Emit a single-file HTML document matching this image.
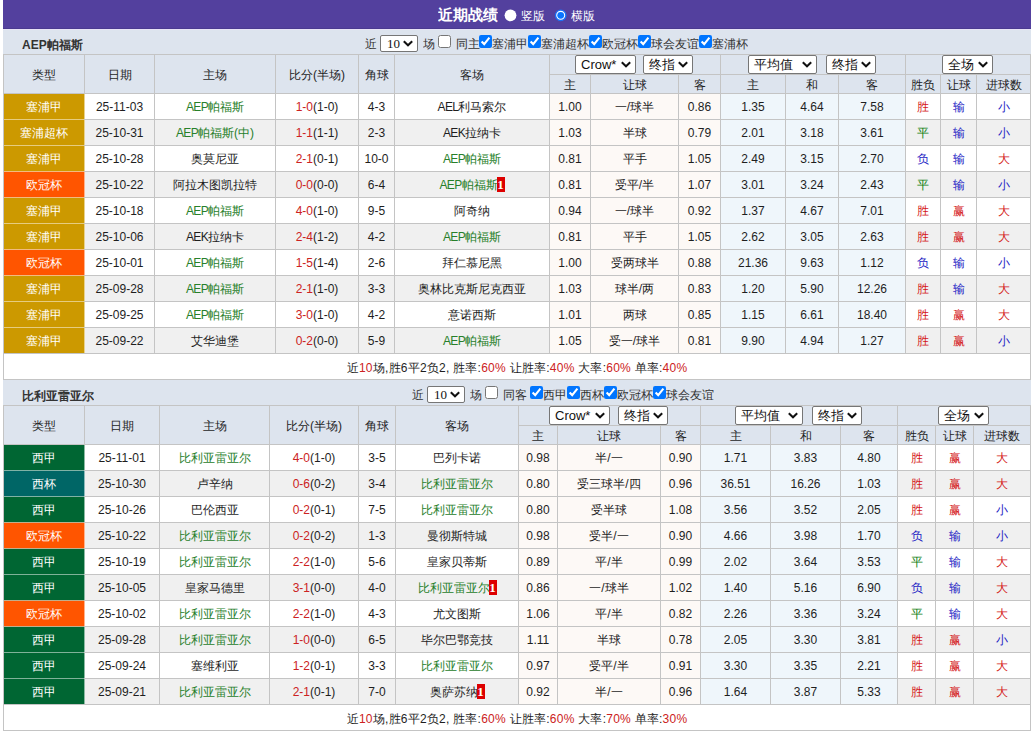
<!DOCTYPE html>
<html><head><meta charset="utf-8"><style>
html,body{margin:0;padding:0;background:#fff;width:1035px;height:731px;overflow:hidden;}
body{font-family:"Liberation Sans", sans-serif;font-size:12px;color:#1e1e1e;position:relative;}
body>div{position:absolute;box-sizing:border-box;white-space:nowrap;overflow:hidden;}
.lg{text-align:center;color:#fff;}
.tn{font-weight:bold;font-size:12px;color:#333;}
.ft{font-size:12px;color:#333;line-height:31px;height:25px;}
.cb{position:absolute;margin:0;width:13px;height:13px;}
.fs{border:1px solid #767676;border-radius:2px;background:#fff;color:#111;font-size:13px;line-height:17px;padding-left:5px;}
.fs .chev{position:absolute;right:4px;top:5px;}
.s10{font-family:"Liberation Serif",serif;font-size:13px;line-height:16px;padding-left:6px;letter-spacing:0px}
.s10 .chev{top:4px;}
.rc{display:inline-block;background:#dd0000;color:#fff;font-weight:bold;font-family:"Liberation Serif",serif;font-size:13px;line-height:15px;width:8px;text-align:center;vertical-align:middle;margin-top:-2px;margin-left:-1px}
.hdr{background:#53409e;}
</style></head><body>
<div class="hdr" style="left:3px;top:0;width:1028px;height:29px;"></div>
<div style="left:3px;top:28px;width:1028px;height:1px;background:#4a3a90;"></div>
<div style="left:438px;top:0;height:28px;line-height:30px;color:#fff;font-weight:bold;font-size:15px;">近期战绩</div>
<div style="left:504px;top:9px;width:14px;height:14px;"><svg width="14" height="14" viewBox="0 0 14 14"><circle cx="6.5" cy="6.3" r="5.9" fill="#fff"/></svg></div>
<div style="left:521px;top:1px;height:28px;line-height:30px;color:#fff;font-size:12px;">竖版</div>
<div style="left:554px;top:9px;width:14px;height:14px;"><svg width="14" height="14" viewBox="0 0 14 14"><circle cx="6.7" cy="6.3" r="5.2" fill="#fff" stroke="#1a6ef5" stroke-width="1.4"/><circle cx="6.7" cy="6.3" r="3.4" fill="#0a75ff"/></svg></div>
<div style="left:571px;top:1px;height:28px;line-height:30px;color:#fff;font-size:12px;">横版</div>
<div style="left:3px;top:29px;width:1028px;height:25px;background:#dde4ee;"></div>
<div class="tn" style="left:22px;top:29px;line-height:33px">AEP帕福斯</div>
<div class="ft" style="left:365px;top:29px">近</div>
<div class="fs s10" style="left:380px;top:35px;width:38px;height:17px">10<svg class="chev" width="10" height="7" viewBox="0 0 10 7"><path d="M0.8 1.2 L5 5.3 L9.2 1.2" fill="none" stroke="#111" stroke-width="2"/></svg></div>
<div class="ft" style="left:423px;top:29px">场</div>
<input type="checkbox" class="cb" style="left:438px;top:35px">
<div class="ft" style="left:456px;top:29px">同主</div>
<input type="checkbox" checked class="cb" style="left:479px;top:35px">
<div class="ft" style="left:492px;top:29px">塞浦甲</div>
<input type="checkbox" checked class="cb" style="left:528px;top:35px">
<div class="ft" style="left:541px;top:29px">塞浦超杯</div>
<input type="checkbox" checked class="cb" style="left:589px;top:35px">
<div class="ft" style="left:602px;top:29px">欧冠杯</div>
<input type="checkbox" checked class="cb" style="left:638px;top:35px">
<div class="ft" style="left:651px;top:29px">球会友谊</div>
<input type="checkbox" checked class="cb" style="left:699px;top:35px">
<div class="ft" style="left:712px;top:29px">塞浦杯</div>
<div style="left:3px;top:54px;width:1028px;height:40px;background:#dde4ee;"></div>
<div style="left:4px;top:55px;width:80px;height:38px;line-height:40px;text-align:center;color:#1e1e1e;">类型</div>
<div style="left:85px;top:55px;width:69px;height:38px;line-height:40px;text-align:center;color:#1e1e1e;">日期</div>
<div style="left:155px;top:55px;width:120px;height:38px;line-height:40px;text-align:center;color:#1e1e1e;">主场</div>
<div style="left:276px;top:55px;width:82px;height:38px;line-height:40px;text-align:center;color:#1e1e1e;">比分(半场)</div>
<div style="left:359px;top:55px;width:35px;height:38px;line-height:40px;text-align:center;color:#1e1e1e;">角球</div>
<div style="left:395px;top:55px;width:154px;height:38px;line-height:40px;text-align:center;color:#1e1e1e;">客场</div>
<div style="left:550px;top:75px;width:40px;height:18px;line-height:20px;text-align:center;color:#1e1e1e;">主</div>
<div style="left:591px;top:75px;width:87px;height:18px;line-height:20px;text-align:center;color:#1e1e1e;">让球</div>
<div style="left:679px;top:75px;width:41px;height:18px;line-height:20px;text-align:center;color:#1e1e1e;">客</div>
<div style="left:721px;top:75px;width:64px;height:18px;line-height:20px;text-align:center;color:#1e1e1e;">主</div>
<div style="left:786px;top:75px;width:52px;height:18px;line-height:20px;text-align:center;color:#1e1e1e;">和</div>
<div style="left:839px;top:75px;width:66px;height:18px;line-height:20px;text-align:center;color:#1e1e1e;">客</div>
<div style="left:906px;top:75px;width:34px;height:18px;line-height:20px;text-align:center;color:#1e1e1e;">胜负</div>
<div style="left:941px;top:75px;width:35px;height:18px;line-height:20px;text-align:center;color:#1e1e1e;">让球</div>
<div style="left:977px;top:75px;width:53px;height:18px;line-height:20px;text-align:center;color:#1e1e1e;">进球数</div>
<div style="left:85px;top:94px;width:69px;height:25px;line-height:27px;text-align:center;color:#1e1e1e;background:#ffffff;">25-11-03</div>
<div style="left:155px;top:94px;width:120px;height:25px;line-height:27px;text-align:center;color:#1e1e1e;background:#ffffff;"><span style="color:#27802a"><span style="letter-spacing:-0.6px">AEP</span>帕福斯</span></div>
<div style="left:276px;top:94px;width:82px;height:25px;line-height:27px;text-align:center;color:#1e1e1e;background:#ffffff;"><span style="color:#cc2222">1-0</span>(1-0)</div>
<div style="left:359px;top:94px;width:35px;height:25px;line-height:27px;text-align:center;color:#1e1e1e;background:#ffffff;">4-3</div>
<div style="left:395px;top:94px;width:154px;height:25px;line-height:27px;text-align:center;color:#1e1e1e;background:#ffffff;"><span style="letter-spacing:-0.6px">AEL</span>利马索尔</div>
<div style="left:550px;top:94px;width:40px;height:25px;line-height:27px;text-align:center;color:#1e1e1e;background:#fdf9f6;">1.00</div>
<div style="left:591px;top:94px;width:87px;height:25px;line-height:27px;text-align:center;color:#1e1e1e;background:#fdf9f6;">一/球半</div>
<div style="left:679px;top:94px;width:41px;height:25px;line-height:27px;text-align:center;color:#1e1e1e;background:#fdf9f6;">0.86</div>
<div style="left:721px;top:94px;width:64px;height:25px;line-height:27px;text-align:center;color:#1e1e1e;background:#eff6fb;">1.35</div>
<div style="left:786px;top:94px;width:52px;height:25px;line-height:27px;text-align:center;color:#1e1e1e;background:#eff6fb;">4.64</div>
<div style="left:839px;top:94px;width:66px;height:25px;line-height:27px;text-align:center;color:#1e1e1e;background:#eff6fb;">7.58</div>
<div style="left:906px;top:94px;width:34px;height:25px;line-height:27px;text-align:center;color:#d41616;background:#ffffff;">胜</div>
<div style="left:941px;top:94px;width:35px;height:25px;line-height:27px;text-align:center;color:#1c1cc4;background:#ffffff;">输</div>
<div style="left:977px;top:94px;width:53px;height:25px;line-height:27px;text-align:center;color:#1c1cc4;background:#ffffff;">小</div>
<div style="left:85px;top:120px;width:69px;height:25px;line-height:27px;text-align:center;color:#1e1e1e;background:#f0f0f0;">25-10-31</div>
<div style="left:155px;top:120px;width:120px;height:25px;line-height:27px;text-align:center;color:#1e1e1e;background:#f0f0f0;"><span style="color:#27802a"><span style="letter-spacing:-0.6px">AEP</span>帕福斯(中)</span></div>
<div style="left:276px;top:120px;width:82px;height:25px;line-height:27px;text-align:center;color:#1e1e1e;background:#f0f0f0;"><span style="color:#cc2222">1-1</span>(1-1)</div>
<div style="left:359px;top:120px;width:35px;height:25px;line-height:27px;text-align:center;color:#1e1e1e;background:#f0f0f0;">2-3</div>
<div style="left:395px;top:120px;width:154px;height:25px;line-height:27px;text-align:center;color:#1e1e1e;background:#f0f0f0;"><span style="letter-spacing:-0.6px">AEK</span>拉纳卡</div>
<div style="left:550px;top:120px;width:40px;height:25px;line-height:27px;text-align:center;color:#1e1e1e;background:#fdf9f6;">1.03</div>
<div style="left:591px;top:120px;width:87px;height:25px;line-height:27px;text-align:center;color:#1e1e1e;background:#fdf9f6;">半球</div>
<div style="left:679px;top:120px;width:41px;height:25px;line-height:27px;text-align:center;color:#1e1e1e;background:#fdf9f6;">0.79</div>
<div style="left:721px;top:120px;width:64px;height:25px;line-height:27px;text-align:center;color:#1e1e1e;background:#eff6fb;">2.01</div>
<div style="left:786px;top:120px;width:52px;height:25px;line-height:27px;text-align:center;color:#1e1e1e;background:#eff6fb;">3.18</div>
<div style="left:839px;top:120px;width:66px;height:25px;line-height:27px;text-align:center;color:#1e1e1e;background:#eff6fb;">3.61</div>
<div style="left:906px;top:120px;width:34px;height:25px;line-height:27px;text-align:center;color:#0f800f;background:#f0f0f0;">平</div>
<div style="left:941px;top:120px;width:35px;height:25px;line-height:27px;text-align:center;color:#1c1cc4;background:#f0f0f0;">输</div>
<div style="left:977px;top:120px;width:53px;height:25px;line-height:27px;text-align:center;color:#1c1cc4;background:#f0f0f0;">小</div>
<div style="left:85px;top:146px;width:69px;height:25px;line-height:27px;text-align:center;color:#1e1e1e;background:#ffffff;">25-10-28</div>
<div style="left:155px;top:146px;width:120px;height:25px;line-height:27px;text-align:center;color:#1e1e1e;background:#ffffff;">奥莫尼亚</div>
<div style="left:276px;top:146px;width:82px;height:25px;line-height:27px;text-align:center;color:#1e1e1e;background:#ffffff;"><span style="color:#cc2222">2-1</span>(0-1)</div>
<div style="left:359px;top:146px;width:35px;height:25px;line-height:27px;text-align:center;color:#1e1e1e;background:#ffffff;">10-0</div>
<div style="left:395px;top:146px;width:154px;height:25px;line-height:27px;text-align:center;color:#1e1e1e;background:#ffffff;"><span style="color:#27802a"><span style="letter-spacing:-0.6px">AEP</span>帕福斯</span></div>
<div style="left:550px;top:146px;width:40px;height:25px;line-height:27px;text-align:center;color:#1e1e1e;background:#fdf9f6;">0.81</div>
<div style="left:591px;top:146px;width:87px;height:25px;line-height:27px;text-align:center;color:#1e1e1e;background:#fdf9f6;">平手</div>
<div style="left:679px;top:146px;width:41px;height:25px;line-height:27px;text-align:center;color:#1e1e1e;background:#fdf9f6;">1.05</div>
<div style="left:721px;top:146px;width:64px;height:25px;line-height:27px;text-align:center;color:#1e1e1e;background:#eff6fb;">2.49</div>
<div style="left:786px;top:146px;width:52px;height:25px;line-height:27px;text-align:center;color:#1e1e1e;background:#eff6fb;">3.15</div>
<div style="left:839px;top:146px;width:66px;height:25px;line-height:27px;text-align:center;color:#1e1e1e;background:#eff6fb;">2.70</div>
<div style="left:906px;top:146px;width:34px;height:25px;line-height:27px;text-align:center;color:#1c1cc4;background:#ffffff;">负</div>
<div style="left:941px;top:146px;width:35px;height:25px;line-height:27px;text-align:center;color:#1c1cc4;background:#ffffff;">输</div>
<div style="left:977px;top:146px;width:53px;height:25px;line-height:27px;text-align:center;color:#d41616;background:#ffffff;">大</div>
<div style="left:85px;top:172px;width:69px;height:25px;line-height:27px;text-align:center;color:#1e1e1e;background:#f0f0f0;">25-10-22</div>
<div style="left:155px;top:172px;width:120px;height:25px;line-height:27px;text-align:center;color:#1e1e1e;background:#f0f0f0;">阿拉木图凯拉特</div>
<div style="left:276px;top:172px;width:82px;height:25px;line-height:27px;text-align:center;color:#1e1e1e;background:#f0f0f0;"><span style="color:#cc2222">0-0</span>(0-0)</div>
<div style="left:359px;top:172px;width:35px;height:25px;line-height:27px;text-align:center;color:#1e1e1e;background:#f0f0f0;">6-4</div>
<div style="left:395px;top:172px;width:154px;height:25px;line-height:27px;text-align:center;color:#1e1e1e;background:#f0f0f0;"><span style="color:#27802a"><span style="letter-spacing:-0.6px">AEP</span>帕福斯</span><span class="rc">1</span></div>
<div style="left:550px;top:172px;width:40px;height:25px;line-height:27px;text-align:center;color:#1e1e1e;background:#fdf9f6;">0.81</div>
<div style="left:591px;top:172px;width:87px;height:25px;line-height:27px;text-align:center;color:#1e1e1e;background:#fdf9f6;">受平/半</div>
<div style="left:679px;top:172px;width:41px;height:25px;line-height:27px;text-align:center;color:#1e1e1e;background:#fdf9f6;">1.07</div>
<div style="left:721px;top:172px;width:64px;height:25px;line-height:27px;text-align:center;color:#1e1e1e;background:#eff6fb;">3.01</div>
<div style="left:786px;top:172px;width:52px;height:25px;line-height:27px;text-align:center;color:#1e1e1e;background:#eff6fb;">3.24</div>
<div style="left:839px;top:172px;width:66px;height:25px;line-height:27px;text-align:center;color:#1e1e1e;background:#eff6fb;">2.43</div>
<div style="left:906px;top:172px;width:34px;height:25px;line-height:27px;text-align:center;color:#0f800f;background:#f0f0f0;">平</div>
<div style="left:941px;top:172px;width:35px;height:25px;line-height:27px;text-align:center;color:#1c1cc4;background:#f0f0f0;">输</div>
<div style="left:977px;top:172px;width:53px;height:25px;line-height:27px;text-align:center;color:#1c1cc4;background:#f0f0f0;">小</div>
<div style="left:85px;top:198px;width:69px;height:25px;line-height:27px;text-align:center;color:#1e1e1e;background:#ffffff;">25-10-18</div>
<div style="left:155px;top:198px;width:120px;height:25px;line-height:27px;text-align:center;color:#1e1e1e;background:#ffffff;"><span style="color:#27802a"><span style="letter-spacing:-0.6px">AEP</span>帕福斯</span></div>
<div style="left:276px;top:198px;width:82px;height:25px;line-height:27px;text-align:center;color:#1e1e1e;background:#ffffff;"><span style="color:#cc2222">4-0</span>(1-0)</div>
<div style="left:359px;top:198px;width:35px;height:25px;line-height:27px;text-align:center;color:#1e1e1e;background:#ffffff;">9-5</div>
<div style="left:395px;top:198px;width:154px;height:25px;line-height:27px;text-align:center;color:#1e1e1e;background:#ffffff;">阿奇纳</div>
<div style="left:550px;top:198px;width:40px;height:25px;line-height:27px;text-align:center;color:#1e1e1e;background:#fdf9f6;">0.94</div>
<div style="left:591px;top:198px;width:87px;height:25px;line-height:27px;text-align:center;color:#1e1e1e;background:#fdf9f6;">一/球半</div>
<div style="left:679px;top:198px;width:41px;height:25px;line-height:27px;text-align:center;color:#1e1e1e;background:#fdf9f6;">0.92</div>
<div style="left:721px;top:198px;width:64px;height:25px;line-height:27px;text-align:center;color:#1e1e1e;background:#eff6fb;">1.37</div>
<div style="left:786px;top:198px;width:52px;height:25px;line-height:27px;text-align:center;color:#1e1e1e;background:#eff6fb;">4.67</div>
<div style="left:839px;top:198px;width:66px;height:25px;line-height:27px;text-align:center;color:#1e1e1e;background:#eff6fb;">7.01</div>
<div style="left:906px;top:198px;width:34px;height:25px;line-height:27px;text-align:center;color:#d41616;background:#ffffff;">胜</div>
<div style="left:941px;top:198px;width:35px;height:25px;line-height:27px;text-align:center;color:#d41616;background:#ffffff;">赢</div>
<div style="left:977px;top:198px;width:53px;height:25px;line-height:27px;text-align:center;color:#d41616;background:#ffffff;">大</div>
<div style="left:85px;top:224px;width:69px;height:25px;line-height:27px;text-align:center;color:#1e1e1e;background:#f0f0f0;">25-10-06</div>
<div style="left:155px;top:224px;width:120px;height:25px;line-height:27px;text-align:center;color:#1e1e1e;background:#f0f0f0;"><span style="letter-spacing:-0.6px">AEK</span>拉纳卡</div>
<div style="left:276px;top:224px;width:82px;height:25px;line-height:27px;text-align:center;color:#1e1e1e;background:#f0f0f0;"><span style="color:#cc2222">2-4</span>(1-2)</div>
<div style="left:359px;top:224px;width:35px;height:25px;line-height:27px;text-align:center;color:#1e1e1e;background:#f0f0f0;">4-2</div>
<div style="left:395px;top:224px;width:154px;height:25px;line-height:27px;text-align:center;color:#1e1e1e;background:#f0f0f0;"><span style="color:#27802a"><span style="letter-spacing:-0.6px">AEP</span>帕福斯</span></div>
<div style="left:550px;top:224px;width:40px;height:25px;line-height:27px;text-align:center;color:#1e1e1e;background:#fdf9f6;">0.81</div>
<div style="left:591px;top:224px;width:87px;height:25px;line-height:27px;text-align:center;color:#1e1e1e;background:#fdf9f6;">平手</div>
<div style="left:679px;top:224px;width:41px;height:25px;line-height:27px;text-align:center;color:#1e1e1e;background:#fdf9f6;">1.05</div>
<div style="left:721px;top:224px;width:64px;height:25px;line-height:27px;text-align:center;color:#1e1e1e;background:#eff6fb;">2.62</div>
<div style="left:786px;top:224px;width:52px;height:25px;line-height:27px;text-align:center;color:#1e1e1e;background:#eff6fb;">3.05</div>
<div style="left:839px;top:224px;width:66px;height:25px;line-height:27px;text-align:center;color:#1e1e1e;background:#eff6fb;">2.63</div>
<div style="left:906px;top:224px;width:34px;height:25px;line-height:27px;text-align:center;color:#d41616;background:#f0f0f0;">胜</div>
<div style="left:941px;top:224px;width:35px;height:25px;line-height:27px;text-align:center;color:#d41616;background:#f0f0f0;">赢</div>
<div style="left:977px;top:224px;width:53px;height:25px;line-height:27px;text-align:center;color:#d41616;background:#f0f0f0;">大</div>
<div style="left:85px;top:250px;width:69px;height:25px;line-height:27px;text-align:center;color:#1e1e1e;background:#ffffff;">25-10-01</div>
<div style="left:155px;top:250px;width:120px;height:25px;line-height:27px;text-align:center;color:#1e1e1e;background:#ffffff;"><span style="color:#27802a"><span style="letter-spacing:-0.6px">AEP</span>帕福斯</span></div>
<div style="left:276px;top:250px;width:82px;height:25px;line-height:27px;text-align:center;color:#1e1e1e;background:#ffffff;"><span style="color:#cc2222">1-5</span>(1-4)</div>
<div style="left:359px;top:250px;width:35px;height:25px;line-height:27px;text-align:center;color:#1e1e1e;background:#ffffff;">2-6</div>
<div style="left:395px;top:250px;width:154px;height:25px;line-height:27px;text-align:center;color:#1e1e1e;background:#ffffff;">拜仁慕尼黑</div>
<div style="left:550px;top:250px;width:40px;height:25px;line-height:27px;text-align:center;color:#1e1e1e;background:#fdf9f6;">1.00</div>
<div style="left:591px;top:250px;width:87px;height:25px;line-height:27px;text-align:center;color:#1e1e1e;background:#fdf9f6;">受两球半</div>
<div style="left:679px;top:250px;width:41px;height:25px;line-height:27px;text-align:center;color:#1e1e1e;background:#fdf9f6;">0.88</div>
<div style="left:721px;top:250px;width:64px;height:25px;line-height:27px;text-align:center;color:#1e1e1e;background:#eff6fb;">21.36</div>
<div style="left:786px;top:250px;width:52px;height:25px;line-height:27px;text-align:center;color:#1e1e1e;background:#eff6fb;">9.63</div>
<div style="left:839px;top:250px;width:66px;height:25px;line-height:27px;text-align:center;color:#1e1e1e;background:#eff6fb;">1.12</div>
<div style="left:906px;top:250px;width:34px;height:25px;line-height:27px;text-align:center;color:#1c1cc4;background:#ffffff;">负</div>
<div style="left:941px;top:250px;width:35px;height:25px;line-height:27px;text-align:center;color:#1c1cc4;background:#ffffff;">输</div>
<div style="left:977px;top:250px;width:53px;height:25px;line-height:27px;text-align:center;color:#1c1cc4;background:#ffffff;">小</div>
<div style="left:85px;top:276px;width:69px;height:25px;line-height:27px;text-align:center;color:#1e1e1e;background:#f0f0f0;">25-09-28</div>
<div style="left:155px;top:276px;width:120px;height:25px;line-height:27px;text-align:center;color:#1e1e1e;background:#f0f0f0;"><span style="color:#27802a"><span style="letter-spacing:-0.6px">AEP</span>帕福斯</span></div>
<div style="left:276px;top:276px;width:82px;height:25px;line-height:27px;text-align:center;color:#1e1e1e;background:#f0f0f0;"><span style="color:#cc2222">2-1</span>(1-0)</div>
<div style="left:359px;top:276px;width:35px;height:25px;line-height:27px;text-align:center;color:#1e1e1e;background:#f0f0f0;">3-3</div>
<div style="left:395px;top:276px;width:154px;height:25px;line-height:27px;text-align:center;color:#1e1e1e;background:#f0f0f0;">奥林比克斯尼克西亚</div>
<div style="left:550px;top:276px;width:40px;height:25px;line-height:27px;text-align:center;color:#1e1e1e;background:#fdf9f6;">1.03</div>
<div style="left:591px;top:276px;width:87px;height:25px;line-height:27px;text-align:center;color:#1e1e1e;background:#fdf9f6;">球半/两</div>
<div style="left:679px;top:276px;width:41px;height:25px;line-height:27px;text-align:center;color:#1e1e1e;background:#fdf9f6;">0.83</div>
<div style="left:721px;top:276px;width:64px;height:25px;line-height:27px;text-align:center;color:#1e1e1e;background:#eff6fb;">1.20</div>
<div style="left:786px;top:276px;width:52px;height:25px;line-height:27px;text-align:center;color:#1e1e1e;background:#eff6fb;">5.90</div>
<div style="left:839px;top:276px;width:66px;height:25px;line-height:27px;text-align:center;color:#1e1e1e;background:#eff6fb;">12.26</div>
<div style="left:906px;top:276px;width:34px;height:25px;line-height:27px;text-align:center;color:#d41616;background:#f0f0f0;">胜</div>
<div style="left:941px;top:276px;width:35px;height:25px;line-height:27px;text-align:center;color:#1c1cc4;background:#f0f0f0;">输</div>
<div style="left:977px;top:276px;width:53px;height:25px;line-height:27px;text-align:center;color:#d41616;background:#f0f0f0;">大</div>
<div style="left:85px;top:302px;width:69px;height:25px;line-height:27px;text-align:center;color:#1e1e1e;background:#ffffff;">25-09-25</div>
<div style="left:155px;top:302px;width:120px;height:25px;line-height:27px;text-align:center;color:#1e1e1e;background:#ffffff;"><span style="color:#27802a"><span style="letter-spacing:-0.6px">AEP</span>帕福斯</span></div>
<div style="left:276px;top:302px;width:82px;height:25px;line-height:27px;text-align:center;color:#1e1e1e;background:#ffffff;"><span style="color:#cc2222">3-0</span>(1-0)</div>
<div style="left:359px;top:302px;width:35px;height:25px;line-height:27px;text-align:center;color:#1e1e1e;background:#ffffff;">4-2</div>
<div style="left:395px;top:302px;width:154px;height:25px;line-height:27px;text-align:center;color:#1e1e1e;background:#ffffff;">意诺西斯</div>
<div style="left:550px;top:302px;width:40px;height:25px;line-height:27px;text-align:center;color:#1e1e1e;background:#fdf9f6;">1.01</div>
<div style="left:591px;top:302px;width:87px;height:25px;line-height:27px;text-align:center;color:#1e1e1e;background:#fdf9f6;">两球</div>
<div style="left:679px;top:302px;width:41px;height:25px;line-height:27px;text-align:center;color:#1e1e1e;background:#fdf9f6;">0.85</div>
<div style="left:721px;top:302px;width:64px;height:25px;line-height:27px;text-align:center;color:#1e1e1e;background:#eff6fb;">1.15</div>
<div style="left:786px;top:302px;width:52px;height:25px;line-height:27px;text-align:center;color:#1e1e1e;background:#eff6fb;">6.61</div>
<div style="left:839px;top:302px;width:66px;height:25px;line-height:27px;text-align:center;color:#1e1e1e;background:#eff6fb;">18.40</div>
<div style="left:906px;top:302px;width:34px;height:25px;line-height:27px;text-align:center;color:#d41616;background:#ffffff;">胜</div>
<div style="left:941px;top:302px;width:35px;height:25px;line-height:27px;text-align:center;color:#d41616;background:#ffffff;">赢</div>
<div style="left:977px;top:302px;width:53px;height:25px;line-height:27px;text-align:center;color:#d41616;background:#ffffff;">大</div>
<div style="left:85px;top:328px;width:69px;height:25px;line-height:27px;text-align:center;color:#1e1e1e;background:#f0f0f0;">25-09-22</div>
<div style="left:155px;top:328px;width:120px;height:25px;line-height:27px;text-align:center;color:#1e1e1e;background:#f0f0f0;">艾华迪堡</div>
<div style="left:276px;top:328px;width:82px;height:25px;line-height:27px;text-align:center;color:#1e1e1e;background:#f0f0f0;"><span style="color:#cc2222">0-2</span>(0-0)</div>
<div style="left:359px;top:328px;width:35px;height:25px;line-height:27px;text-align:center;color:#1e1e1e;background:#f0f0f0;">5-9</div>
<div style="left:395px;top:328px;width:154px;height:25px;line-height:27px;text-align:center;color:#1e1e1e;background:#f0f0f0;"><span style="color:#27802a"><span style="letter-spacing:-0.6px">AEP</span>帕福斯</span></div>
<div style="left:550px;top:328px;width:40px;height:25px;line-height:27px;text-align:center;color:#1e1e1e;background:#fdf9f6;">1.05</div>
<div style="left:591px;top:328px;width:87px;height:25px;line-height:27px;text-align:center;color:#1e1e1e;background:#fdf9f6;">受一/球半</div>
<div style="left:679px;top:328px;width:41px;height:25px;line-height:27px;text-align:center;color:#1e1e1e;background:#fdf9f6;">0.81</div>
<div style="left:721px;top:328px;width:64px;height:25px;line-height:27px;text-align:center;color:#1e1e1e;background:#eff6fb;">9.90</div>
<div style="left:786px;top:328px;width:52px;height:25px;line-height:27px;text-align:center;color:#1e1e1e;background:#eff6fb;">4.94</div>
<div style="left:839px;top:328px;width:66px;height:25px;line-height:27px;text-align:center;color:#1e1e1e;background:#eff6fb;">1.27</div>
<div style="left:906px;top:328px;width:34px;height:25px;line-height:27px;text-align:center;color:#d41616;background:#f0f0f0;">胜</div>
<div style="left:941px;top:328px;width:35px;height:25px;line-height:27px;text-align:center;color:#d41616;background:#f0f0f0;">赢</div>
<div style="left:977px;top:328px;width:53px;height:25px;line-height:27px;text-align:center;color:#1c1cc4;background:#f0f0f0;">小</div>
<div style="left:4px;top:354px;width:1026px;height:25px;background:#fff;line-height:29px;text-align:center;color:#1e1e1e;letter-spacing:0.24px;">近<span style="color:#cc2222">10</span>场,胜6平2负2, 胜率:<span style="color:#cc2222">60%</span> 让胜率:<span style="color:#cc2222">40%</span> 大率:<span style="color:#cc2222">60%</span> 单率:<span style="color:#cc2222">40%</span></div>
<div style="left:3px;top:54px;width:1028px;height:1px;background:#c4c4c4;"></div>
<div style="left:3px;top:93px;width:1028px;height:1px;background:#c4c4c4;"></div>
<div style="left:3px;top:119px;width:1028px;height:1px;background:#c4c4c4;"></div>
<div style="left:3px;top:145px;width:1028px;height:1px;background:#c4c4c4;"></div>
<div style="left:3px;top:171px;width:1028px;height:1px;background:#c4c4c4;"></div>
<div style="left:3px;top:197px;width:1028px;height:1px;background:#c4c4c4;"></div>
<div style="left:3px;top:223px;width:1028px;height:1px;background:#c4c4c4;"></div>
<div style="left:3px;top:249px;width:1028px;height:1px;background:#c4c4c4;"></div>
<div style="left:3px;top:275px;width:1028px;height:1px;background:#c4c4c4;"></div>
<div style="left:3px;top:301px;width:1028px;height:1px;background:#c4c4c4;"></div>
<div style="left:3px;top:327px;width:1028px;height:1px;background:#c4c4c4;"></div>
<div style="left:3px;top:353px;width:1028px;height:1px;background:#c4c4c4;"></div>
<div style="left:3px;top:379px;width:1028px;height:1px;background:#c4c4c4;"></div>
<div style="left:549px;top:74px;width:482px;height:1px;background:#c4c4c4;"></div>
<div style="left:3px;top:54px;width:1px;height:326px;background:#c4c4c4;"></div>
<div style="left:1030px;top:54px;width:1px;height:326px;background:#c4c4c4;"></div>
<div style="left:84px;top:54px;width:1px;height:40px;background:#c4c4c4;"></div>
<div style="left:154px;top:54px;width:1px;height:300px;background:#c4c4c4;"></div>
<div style="left:275px;top:54px;width:1px;height:300px;background:#c4c4c4;"></div>
<div style="left:358px;top:54px;width:1px;height:300px;background:#c4c4c4;"></div>
<div style="left:394px;top:54px;width:1px;height:300px;background:#c4c4c4;"></div>
<div style="left:549px;top:54px;width:1px;height:300px;background:#c4c4c4;"></div>
<div style="left:590px;top:74px;width:1px;height:280px;background:#c4c4c4;"></div>
<div style="left:678px;top:74px;width:1px;height:280px;background:#c4c4c4;"></div>
<div style="left:720px;top:54px;width:1px;height:300px;background:#c4c4c4;"></div>
<div style="left:785px;top:74px;width:1px;height:280px;background:#c4c4c4;"></div>
<div style="left:838px;top:74px;width:1px;height:280px;background:#c4c4c4;"></div>
<div style="left:905px;top:54px;width:1px;height:300px;background:#c4c4c4;"></div>
<div style="left:940px;top:74px;width:1px;height:280px;background:#c4c4c4;"></div>
<div style="left:976px;top:74px;width:1px;height:280px;background:#c4c4c4;"></div>
<div style="left:4px;top:94px;width:80px;height:25px;background:#cc9900;"></div>
<div style="left:84px;top:94px;width:1px;height:25px;background:#e8d18c;"></div>
<div class="lg" style="left:4px;top:94px;width:80px;height:25px;line-height:27px;">塞浦甲</div>
<div style="left:4px;top:119px;width:80px;height:1px;background:#e6cc80;"></div>
<div style="left:4px;top:120px;width:80px;height:25px;background:#cc9900;"></div>
<div style="left:84px;top:120px;width:1px;height:25px;background:#e8d18c;"></div>
<div class="lg" style="left:4px;top:120px;width:80px;height:25px;line-height:27px;">塞浦超杯</div>
<div style="left:4px;top:145px;width:80px;height:1px;background:#e6cc80;"></div>
<div style="left:4px;top:146px;width:80px;height:25px;background:#cc9900;"></div>
<div style="left:84px;top:146px;width:1px;height:25px;background:#e8d18c;"></div>
<div class="lg" style="left:4px;top:146px;width:80px;height:25px;line-height:27px;">塞浦甲</div>
<div style="left:4px;top:171px;width:80px;height:1px;background:#f2bb80;"></div>
<div style="left:4px;top:172px;width:80px;height:25px;background:#ff5500;"></div>
<div style="left:84px;top:172px;width:1px;height:25px;background:#ffb28c;"></div>
<div class="lg" style="left:4px;top:172px;width:80px;height:25px;line-height:27px;">欧冠杯</div>
<div style="left:4px;top:197px;width:80px;height:1px;background:#f2bb80;"></div>
<div style="left:4px;top:198px;width:80px;height:25px;background:#cc9900;"></div>
<div style="left:84px;top:198px;width:1px;height:25px;background:#e8d18c;"></div>
<div class="lg" style="left:4px;top:198px;width:80px;height:25px;line-height:27px;">塞浦甲</div>
<div style="left:4px;top:223px;width:80px;height:1px;background:#e6cc80;"></div>
<div style="left:4px;top:224px;width:80px;height:25px;background:#cc9900;"></div>
<div style="left:84px;top:224px;width:1px;height:25px;background:#e8d18c;"></div>
<div class="lg" style="left:4px;top:224px;width:80px;height:25px;line-height:27px;">塞浦甲</div>
<div style="left:4px;top:249px;width:80px;height:1px;background:#f2bb80;"></div>
<div style="left:4px;top:250px;width:80px;height:25px;background:#ff5500;"></div>
<div style="left:84px;top:250px;width:1px;height:25px;background:#ffb28c;"></div>
<div class="lg" style="left:4px;top:250px;width:80px;height:25px;line-height:27px;">欧冠杯</div>
<div style="left:4px;top:275px;width:80px;height:1px;background:#f2bb80;"></div>
<div style="left:4px;top:276px;width:80px;height:25px;background:#cc9900;"></div>
<div style="left:84px;top:276px;width:1px;height:25px;background:#e8d18c;"></div>
<div class="lg" style="left:4px;top:276px;width:80px;height:25px;line-height:27px;">塞浦甲</div>
<div style="left:4px;top:301px;width:80px;height:1px;background:#e6cc80;"></div>
<div style="left:4px;top:302px;width:80px;height:25px;background:#cc9900;"></div>
<div style="left:84px;top:302px;width:1px;height:25px;background:#e8d18c;"></div>
<div class="lg" style="left:4px;top:302px;width:80px;height:25px;line-height:27px;">塞浦甲</div>
<div style="left:4px;top:327px;width:80px;height:1px;background:#e6cc80;"></div>
<div style="left:4px;top:328px;width:80px;height:25px;background:#cc9900;"></div>
<div style="left:84px;top:328px;width:1px;height:25px;background:#e8d18c;"></div>
<div class="lg" style="left:4px;top:328px;width:80px;height:25px;line-height:27px;">塞浦甲</div>
<div class="fs" style="left:575px;top:55px;width:61px;height:19px">Crow*<svg class="chev" width="10" height="7" viewBox="0 0 10 7"><path d="M0.8 1.2 L5 5.3 L9.2 1.2" fill="none" stroke="#111" stroke-width="2"/></svg></div>
<div class="fs" style="left:643px;top:55px;width:50px;height:19px">终指<svg class="chev" width="10" height="7" viewBox="0 0 10 7"><path d="M0.8 1.2 L5 5.3 L9.2 1.2" fill="none" stroke="#111" stroke-width="2"/></svg></div>
<div class="fs" style="left:748px;top:55px;width:69px;height:19px">平均值<svg class="chev" width="10" height="7" viewBox="0 0 10 7"><path d="M0.8 1.2 L5 5.3 L9.2 1.2" fill="none" stroke="#111" stroke-width="2"/></svg></div>
<div class="fs" style="left:826px;top:55px;width:50px;height:19px">终指<svg class="chev" width="10" height="7" viewBox="0 0 10 7"><path d="M0.8 1.2 L5 5.3 L9.2 1.2" fill="none" stroke="#111" stroke-width="2"/></svg></div>
<div class="fs" style="left:942px;top:55px;width:51px;height:19px">全场<svg class="chev" width="10" height="7" viewBox="0 0 10 7"><path d="M0.8 1.2 L5 5.3 L9.2 1.2" fill="none" stroke="#111" stroke-width="2"/></svg></div>
<div style="left:3px;top:380px;width:1028px;height:25px;background:#dde4ee;"></div>
<div class="tn" style="left:22px;top:380px;line-height:33px">比利亚雷亚尔</div>
<div class="ft" style="left:412px;top:380px">近</div>
<div class="fs s10" style="left:427px;top:386px;width:38px;height:17px">10<svg class="chev" width="10" height="7" viewBox="0 0 10 7"><path d="M0.8 1.2 L5 5.3 L9.2 1.2" fill="none" stroke="#111" stroke-width="2"/></svg></div>
<div class="ft" style="left:470px;top:380px">场</div>
<input type="checkbox" class="cb" style="left:485px;top:386px">
<div class="ft" style="left:503px;top:380px">同客</div>
<input type="checkbox" checked class="cb" style="left:530px;top:386px">
<div class="ft" style="left:543px;top:380px">西甲</div>
<input type="checkbox" checked class="cb" style="left:567px;top:386px">
<div class="ft" style="left:580px;top:380px">西杯</div>
<input type="checkbox" checked class="cb" style="left:604px;top:386px">
<div class="ft" style="left:617px;top:380px">欧冠杯</div>
<input type="checkbox" checked class="cb" style="left:653px;top:386px">
<div class="ft" style="left:666px;top:380px">球会友谊</div>
<div style="left:3px;top:405px;width:1028px;height:40px;background:#dde4ee;"></div>
<div style="left:4px;top:406px;width:80px;height:38px;line-height:40px;text-align:center;color:#1e1e1e;">类型</div>
<div style="left:85px;top:406px;width:74px;height:38px;line-height:40px;text-align:center;color:#1e1e1e;">日期</div>
<div style="left:160px;top:406px;width:109px;height:38px;line-height:40px;text-align:center;color:#1e1e1e;">主场</div>
<div style="left:270px;top:406px;width:88px;height:38px;line-height:40px;text-align:center;color:#1e1e1e;">比分(半场)</div>
<div style="left:359px;top:406px;width:36px;height:38px;line-height:40px;text-align:center;color:#1e1e1e;">角球</div>
<div style="left:396px;top:406px;width:122px;height:38px;line-height:40px;text-align:center;color:#1e1e1e;">客场</div>
<div style="left:519px;top:426px;width:38px;height:18px;line-height:20px;text-align:center;color:#1e1e1e;">主</div>
<div style="left:558px;top:426px;width:102px;height:18px;line-height:20px;text-align:center;color:#1e1e1e;">让球</div>
<div style="left:661px;top:426px;width:39px;height:18px;line-height:20px;text-align:center;color:#1e1e1e;">客</div>
<div style="left:701px;top:426px;width:69px;height:18px;line-height:20px;text-align:center;color:#1e1e1e;">主</div>
<div style="left:771px;top:426px;width:69px;height:18px;line-height:20px;text-align:center;color:#1e1e1e;">和</div>
<div style="left:841px;top:426px;width:56px;height:18px;line-height:20px;text-align:center;color:#1e1e1e;">客</div>
<div style="left:898px;top:426px;width:37px;height:18px;line-height:20px;text-align:center;color:#1e1e1e;">胜负</div>
<div style="left:936px;top:426px;width:37px;height:18px;line-height:20px;text-align:center;color:#1e1e1e;">让球</div>
<div style="left:974px;top:426px;width:56px;height:18px;line-height:20px;text-align:center;color:#1e1e1e;">进球数</div>
<div style="left:85px;top:445px;width:74px;height:25px;line-height:27px;text-align:center;color:#1e1e1e;background:#ffffff;">25-11-01</div>
<div style="left:160px;top:445px;width:109px;height:25px;line-height:27px;text-align:center;color:#1e1e1e;background:#ffffff;"><span style="color:#27802a">比利亚雷亚尔</span></div>
<div style="left:270px;top:445px;width:88px;height:25px;line-height:27px;text-align:center;color:#1e1e1e;background:#ffffff;"><span style="color:#cc2222">4-0</span>(1-0)</div>
<div style="left:359px;top:445px;width:36px;height:25px;line-height:27px;text-align:center;color:#1e1e1e;background:#ffffff;">3-5</div>
<div style="left:396px;top:445px;width:122px;height:25px;line-height:27px;text-align:center;color:#1e1e1e;background:#ffffff;">巴列卡诺</div>
<div style="left:519px;top:445px;width:38px;height:25px;line-height:27px;text-align:center;color:#1e1e1e;background:#fdf9f6;">0.98</div>
<div style="left:558px;top:445px;width:102px;height:25px;line-height:27px;text-align:center;color:#1e1e1e;background:#fdf9f6;">半/一</div>
<div style="left:661px;top:445px;width:39px;height:25px;line-height:27px;text-align:center;color:#1e1e1e;background:#fdf9f6;">0.90</div>
<div style="left:701px;top:445px;width:69px;height:25px;line-height:27px;text-align:center;color:#1e1e1e;background:#eff6fb;">1.71</div>
<div style="left:771px;top:445px;width:69px;height:25px;line-height:27px;text-align:center;color:#1e1e1e;background:#eff6fb;">3.83</div>
<div style="left:841px;top:445px;width:56px;height:25px;line-height:27px;text-align:center;color:#1e1e1e;background:#eff6fb;">4.80</div>
<div style="left:898px;top:445px;width:37px;height:25px;line-height:27px;text-align:center;color:#d41616;background:#ffffff;">胜</div>
<div style="left:936px;top:445px;width:37px;height:25px;line-height:27px;text-align:center;color:#d41616;background:#ffffff;">赢</div>
<div style="left:974px;top:445px;width:56px;height:25px;line-height:27px;text-align:center;color:#d41616;background:#ffffff;">大</div>
<div style="left:85px;top:471px;width:74px;height:25px;line-height:27px;text-align:center;color:#1e1e1e;background:#f0f0f0;">25-10-30</div>
<div style="left:160px;top:471px;width:109px;height:25px;line-height:27px;text-align:center;color:#1e1e1e;background:#f0f0f0;">卢辛纳</div>
<div style="left:270px;top:471px;width:88px;height:25px;line-height:27px;text-align:center;color:#1e1e1e;background:#f0f0f0;"><span style="color:#cc2222">0-6</span>(0-2)</div>
<div style="left:359px;top:471px;width:36px;height:25px;line-height:27px;text-align:center;color:#1e1e1e;background:#f0f0f0;">3-4</div>
<div style="left:396px;top:471px;width:122px;height:25px;line-height:27px;text-align:center;color:#1e1e1e;background:#f0f0f0;"><span style="color:#27802a">比利亚雷亚尔</span></div>
<div style="left:519px;top:471px;width:38px;height:25px;line-height:27px;text-align:center;color:#1e1e1e;background:#fdf9f6;">0.80</div>
<div style="left:558px;top:471px;width:102px;height:25px;line-height:27px;text-align:center;color:#1e1e1e;background:#fdf9f6;">受三球半/四</div>
<div style="left:661px;top:471px;width:39px;height:25px;line-height:27px;text-align:center;color:#1e1e1e;background:#fdf9f6;">0.96</div>
<div style="left:701px;top:471px;width:69px;height:25px;line-height:27px;text-align:center;color:#1e1e1e;background:#eff6fb;">36.51</div>
<div style="left:771px;top:471px;width:69px;height:25px;line-height:27px;text-align:center;color:#1e1e1e;background:#eff6fb;">16.26</div>
<div style="left:841px;top:471px;width:56px;height:25px;line-height:27px;text-align:center;color:#1e1e1e;background:#eff6fb;">1.03</div>
<div style="left:898px;top:471px;width:37px;height:25px;line-height:27px;text-align:center;color:#d41616;background:#f0f0f0;">胜</div>
<div style="left:936px;top:471px;width:37px;height:25px;line-height:27px;text-align:center;color:#d41616;background:#f0f0f0;">赢</div>
<div style="left:974px;top:471px;width:56px;height:25px;line-height:27px;text-align:center;color:#d41616;background:#f0f0f0;">大</div>
<div style="left:85px;top:497px;width:74px;height:25px;line-height:27px;text-align:center;color:#1e1e1e;background:#ffffff;">25-10-26</div>
<div style="left:160px;top:497px;width:109px;height:25px;line-height:27px;text-align:center;color:#1e1e1e;background:#ffffff;">巴伦西亚</div>
<div style="left:270px;top:497px;width:88px;height:25px;line-height:27px;text-align:center;color:#1e1e1e;background:#ffffff;"><span style="color:#cc2222">0-2</span>(0-1)</div>
<div style="left:359px;top:497px;width:36px;height:25px;line-height:27px;text-align:center;color:#1e1e1e;background:#ffffff;">7-5</div>
<div style="left:396px;top:497px;width:122px;height:25px;line-height:27px;text-align:center;color:#1e1e1e;background:#ffffff;"><span style="color:#27802a">比利亚雷亚尔</span></div>
<div style="left:519px;top:497px;width:38px;height:25px;line-height:27px;text-align:center;color:#1e1e1e;background:#fdf9f6;">0.80</div>
<div style="left:558px;top:497px;width:102px;height:25px;line-height:27px;text-align:center;color:#1e1e1e;background:#fdf9f6;">受半球</div>
<div style="left:661px;top:497px;width:39px;height:25px;line-height:27px;text-align:center;color:#1e1e1e;background:#fdf9f6;">1.08</div>
<div style="left:701px;top:497px;width:69px;height:25px;line-height:27px;text-align:center;color:#1e1e1e;background:#eff6fb;">3.56</div>
<div style="left:771px;top:497px;width:69px;height:25px;line-height:27px;text-align:center;color:#1e1e1e;background:#eff6fb;">3.52</div>
<div style="left:841px;top:497px;width:56px;height:25px;line-height:27px;text-align:center;color:#1e1e1e;background:#eff6fb;">2.05</div>
<div style="left:898px;top:497px;width:37px;height:25px;line-height:27px;text-align:center;color:#d41616;background:#ffffff;">胜</div>
<div style="left:936px;top:497px;width:37px;height:25px;line-height:27px;text-align:center;color:#d41616;background:#ffffff;">赢</div>
<div style="left:974px;top:497px;width:56px;height:25px;line-height:27px;text-align:center;color:#1c1cc4;background:#ffffff;">小</div>
<div style="left:85px;top:523px;width:74px;height:25px;line-height:27px;text-align:center;color:#1e1e1e;background:#f0f0f0;">25-10-22</div>
<div style="left:160px;top:523px;width:109px;height:25px;line-height:27px;text-align:center;color:#1e1e1e;background:#f0f0f0;"><span style="color:#27802a">比利亚雷亚尔</span></div>
<div style="left:270px;top:523px;width:88px;height:25px;line-height:27px;text-align:center;color:#1e1e1e;background:#f0f0f0;"><span style="color:#cc2222">0-2</span>(0-2)</div>
<div style="left:359px;top:523px;width:36px;height:25px;line-height:27px;text-align:center;color:#1e1e1e;background:#f0f0f0;">1-3</div>
<div style="left:396px;top:523px;width:122px;height:25px;line-height:27px;text-align:center;color:#1e1e1e;background:#f0f0f0;">曼彻斯特城</div>
<div style="left:519px;top:523px;width:38px;height:25px;line-height:27px;text-align:center;color:#1e1e1e;background:#fdf9f6;">0.98</div>
<div style="left:558px;top:523px;width:102px;height:25px;line-height:27px;text-align:center;color:#1e1e1e;background:#fdf9f6;">受半/一</div>
<div style="left:661px;top:523px;width:39px;height:25px;line-height:27px;text-align:center;color:#1e1e1e;background:#fdf9f6;">0.90</div>
<div style="left:701px;top:523px;width:69px;height:25px;line-height:27px;text-align:center;color:#1e1e1e;background:#eff6fb;">4.66</div>
<div style="left:771px;top:523px;width:69px;height:25px;line-height:27px;text-align:center;color:#1e1e1e;background:#eff6fb;">3.98</div>
<div style="left:841px;top:523px;width:56px;height:25px;line-height:27px;text-align:center;color:#1e1e1e;background:#eff6fb;">1.70</div>
<div style="left:898px;top:523px;width:37px;height:25px;line-height:27px;text-align:center;color:#1c1cc4;background:#f0f0f0;">负</div>
<div style="left:936px;top:523px;width:37px;height:25px;line-height:27px;text-align:center;color:#1c1cc4;background:#f0f0f0;">输</div>
<div style="left:974px;top:523px;width:56px;height:25px;line-height:27px;text-align:center;color:#1c1cc4;background:#f0f0f0;">小</div>
<div style="left:85px;top:549px;width:74px;height:25px;line-height:27px;text-align:center;color:#1e1e1e;background:#ffffff;">25-10-19</div>
<div style="left:160px;top:549px;width:109px;height:25px;line-height:27px;text-align:center;color:#1e1e1e;background:#ffffff;"><span style="color:#27802a">比利亚雷亚尔</span></div>
<div style="left:270px;top:549px;width:88px;height:25px;line-height:27px;text-align:center;color:#1e1e1e;background:#ffffff;"><span style="color:#cc2222">2-2</span>(1-0)</div>
<div style="left:359px;top:549px;width:36px;height:25px;line-height:27px;text-align:center;color:#1e1e1e;background:#ffffff;">5-6</div>
<div style="left:396px;top:549px;width:122px;height:25px;line-height:27px;text-align:center;color:#1e1e1e;background:#ffffff;">皇家贝蒂斯</div>
<div style="left:519px;top:549px;width:38px;height:25px;line-height:27px;text-align:center;color:#1e1e1e;background:#fdf9f6;">0.89</div>
<div style="left:558px;top:549px;width:102px;height:25px;line-height:27px;text-align:center;color:#1e1e1e;background:#fdf9f6;">平/半</div>
<div style="left:661px;top:549px;width:39px;height:25px;line-height:27px;text-align:center;color:#1e1e1e;background:#fdf9f6;">0.99</div>
<div style="left:701px;top:549px;width:69px;height:25px;line-height:27px;text-align:center;color:#1e1e1e;background:#eff6fb;">2.02</div>
<div style="left:771px;top:549px;width:69px;height:25px;line-height:27px;text-align:center;color:#1e1e1e;background:#eff6fb;">3.64</div>
<div style="left:841px;top:549px;width:56px;height:25px;line-height:27px;text-align:center;color:#1e1e1e;background:#eff6fb;">3.53</div>
<div style="left:898px;top:549px;width:37px;height:25px;line-height:27px;text-align:center;color:#0f800f;background:#ffffff;">平</div>
<div style="left:936px;top:549px;width:37px;height:25px;line-height:27px;text-align:center;color:#1c1cc4;background:#ffffff;">输</div>
<div style="left:974px;top:549px;width:56px;height:25px;line-height:27px;text-align:center;color:#d41616;background:#ffffff;">大</div>
<div style="left:85px;top:575px;width:74px;height:25px;line-height:27px;text-align:center;color:#1e1e1e;background:#f0f0f0;">25-10-05</div>
<div style="left:160px;top:575px;width:109px;height:25px;line-height:27px;text-align:center;color:#1e1e1e;background:#f0f0f0;">皇家马德里</div>
<div style="left:270px;top:575px;width:88px;height:25px;line-height:27px;text-align:center;color:#1e1e1e;background:#f0f0f0;"><span style="color:#cc2222">3-1</span>(0-0)</div>
<div style="left:359px;top:575px;width:36px;height:25px;line-height:27px;text-align:center;color:#1e1e1e;background:#f0f0f0;">4-0</div>
<div style="left:396px;top:575px;width:122px;height:25px;line-height:27px;text-align:center;color:#1e1e1e;background:#f0f0f0;"><span style="color:#27802a">比利亚雷亚尔</span><span class="rc">1</span></div>
<div style="left:519px;top:575px;width:38px;height:25px;line-height:27px;text-align:center;color:#1e1e1e;background:#fdf9f6;">0.86</div>
<div style="left:558px;top:575px;width:102px;height:25px;line-height:27px;text-align:center;color:#1e1e1e;background:#fdf9f6;">一/球半</div>
<div style="left:661px;top:575px;width:39px;height:25px;line-height:27px;text-align:center;color:#1e1e1e;background:#fdf9f6;">1.02</div>
<div style="left:701px;top:575px;width:69px;height:25px;line-height:27px;text-align:center;color:#1e1e1e;background:#eff6fb;">1.40</div>
<div style="left:771px;top:575px;width:69px;height:25px;line-height:27px;text-align:center;color:#1e1e1e;background:#eff6fb;">5.16</div>
<div style="left:841px;top:575px;width:56px;height:25px;line-height:27px;text-align:center;color:#1e1e1e;background:#eff6fb;">6.90</div>
<div style="left:898px;top:575px;width:37px;height:25px;line-height:27px;text-align:center;color:#1c1cc4;background:#f0f0f0;">负</div>
<div style="left:936px;top:575px;width:37px;height:25px;line-height:27px;text-align:center;color:#1c1cc4;background:#f0f0f0;">输</div>
<div style="left:974px;top:575px;width:56px;height:25px;line-height:27px;text-align:center;color:#d41616;background:#f0f0f0;">大</div>
<div style="left:85px;top:601px;width:74px;height:25px;line-height:27px;text-align:center;color:#1e1e1e;background:#ffffff;">25-10-02</div>
<div style="left:160px;top:601px;width:109px;height:25px;line-height:27px;text-align:center;color:#1e1e1e;background:#ffffff;"><span style="color:#27802a">比利亚雷亚尔</span></div>
<div style="left:270px;top:601px;width:88px;height:25px;line-height:27px;text-align:center;color:#1e1e1e;background:#ffffff;"><span style="color:#cc2222">2-2</span>(1-0)</div>
<div style="left:359px;top:601px;width:36px;height:25px;line-height:27px;text-align:center;color:#1e1e1e;background:#ffffff;">4-3</div>
<div style="left:396px;top:601px;width:122px;height:25px;line-height:27px;text-align:center;color:#1e1e1e;background:#ffffff;">尤文图斯</div>
<div style="left:519px;top:601px;width:38px;height:25px;line-height:27px;text-align:center;color:#1e1e1e;background:#fdf9f6;">1.06</div>
<div style="left:558px;top:601px;width:102px;height:25px;line-height:27px;text-align:center;color:#1e1e1e;background:#fdf9f6;">平/半</div>
<div style="left:661px;top:601px;width:39px;height:25px;line-height:27px;text-align:center;color:#1e1e1e;background:#fdf9f6;">0.82</div>
<div style="left:701px;top:601px;width:69px;height:25px;line-height:27px;text-align:center;color:#1e1e1e;background:#eff6fb;">2.26</div>
<div style="left:771px;top:601px;width:69px;height:25px;line-height:27px;text-align:center;color:#1e1e1e;background:#eff6fb;">3.36</div>
<div style="left:841px;top:601px;width:56px;height:25px;line-height:27px;text-align:center;color:#1e1e1e;background:#eff6fb;">3.24</div>
<div style="left:898px;top:601px;width:37px;height:25px;line-height:27px;text-align:center;color:#0f800f;background:#ffffff;">平</div>
<div style="left:936px;top:601px;width:37px;height:25px;line-height:27px;text-align:center;color:#1c1cc4;background:#ffffff;">输</div>
<div style="left:974px;top:601px;width:56px;height:25px;line-height:27px;text-align:center;color:#d41616;background:#ffffff;">大</div>
<div style="left:85px;top:627px;width:74px;height:25px;line-height:27px;text-align:center;color:#1e1e1e;background:#f0f0f0;">25-09-28</div>
<div style="left:160px;top:627px;width:109px;height:25px;line-height:27px;text-align:center;color:#1e1e1e;background:#f0f0f0;"><span style="color:#27802a">比利亚雷亚尔</span></div>
<div style="left:270px;top:627px;width:88px;height:25px;line-height:27px;text-align:center;color:#1e1e1e;background:#f0f0f0;"><span style="color:#cc2222">1-0</span>(0-0)</div>
<div style="left:359px;top:627px;width:36px;height:25px;line-height:27px;text-align:center;color:#1e1e1e;background:#f0f0f0;">6-5</div>
<div style="left:396px;top:627px;width:122px;height:25px;line-height:27px;text-align:center;color:#1e1e1e;background:#f0f0f0;">毕尔巴鄂竞技</div>
<div style="left:519px;top:627px;width:38px;height:25px;line-height:27px;text-align:center;color:#1e1e1e;background:#fdf9f6;">1.11</div>
<div style="left:558px;top:627px;width:102px;height:25px;line-height:27px;text-align:center;color:#1e1e1e;background:#fdf9f6;">半球</div>
<div style="left:661px;top:627px;width:39px;height:25px;line-height:27px;text-align:center;color:#1e1e1e;background:#fdf9f6;">0.78</div>
<div style="left:701px;top:627px;width:69px;height:25px;line-height:27px;text-align:center;color:#1e1e1e;background:#eff6fb;">2.05</div>
<div style="left:771px;top:627px;width:69px;height:25px;line-height:27px;text-align:center;color:#1e1e1e;background:#eff6fb;">3.30</div>
<div style="left:841px;top:627px;width:56px;height:25px;line-height:27px;text-align:center;color:#1e1e1e;background:#eff6fb;">3.81</div>
<div style="left:898px;top:627px;width:37px;height:25px;line-height:27px;text-align:center;color:#d41616;background:#f0f0f0;">胜</div>
<div style="left:936px;top:627px;width:37px;height:25px;line-height:27px;text-align:center;color:#d41616;background:#f0f0f0;">赢</div>
<div style="left:974px;top:627px;width:56px;height:25px;line-height:27px;text-align:center;color:#1c1cc4;background:#f0f0f0;">小</div>
<div style="left:85px;top:653px;width:74px;height:25px;line-height:27px;text-align:center;color:#1e1e1e;background:#ffffff;">25-09-24</div>
<div style="left:160px;top:653px;width:109px;height:25px;line-height:27px;text-align:center;color:#1e1e1e;background:#ffffff;">塞维利亚</div>
<div style="left:270px;top:653px;width:88px;height:25px;line-height:27px;text-align:center;color:#1e1e1e;background:#ffffff;"><span style="color:#cc2222">1-2</span>(0-1)</div>
<div style="left:359px;top:653px;width:36px;height:25px;line-height:27px;text-align:center;color:#1e1e1e;background:#ffffff;">3-3</div>
<div style="left:396px;top:653px;width:122px;height:25px;line-height:27px;text-align:center;color:#1e1e1e;background:#ffffff;"><span style="color:#27802a">比利亚雷亚尔</span></div>
<div style="left:519px;top:653px;width:38px;height:25px;line-height:27px;text-align:center;color:#1e1e1e;background:#fdf9f6;">0.97</div>
<div style="left:558px;top:653px;width:102px;height:25px;line-height:27px;text-align:center;color:#1e1e1e;background:#fdf9f6;">受平/半</div>
<div style="left:661px;top:653px;width:39px;height:25px;line-height:27px;text-align:center;color:#1e1e1e;background:#fdf9f6;">0.91</div>
<div style="left:701px;top:653px;width:69px;height:25px;line-height:27px;text-align:center;color:#1e1e1e;background:#eff6fb;">3.30</div>
<div style="left:771px;top:653px;width:69px;height:25px;line-height:27px;text-align:center;color:#1e1e1e;background:#eff6fb;">3.35</div>
<div style="left:841px;top:653px;width:56px;height:25px;line-height:27px;text-align:center;color:#1e1e1e;background:#eff6fb;">2.21</div>
<div style="left:898px;top:653px;width:37px;height:25px;line-height:27px;text-align:center;color:#d41616;background:#ffffff;">胜</div>
<div style="left:936px;top:653px;width:37px;height:25px;line-height:27px;text-align:center;color:#d41616;background:#ffffff;">赢</div>
<div style="left:974px;top:653px;width:56px;height:25px;line-height:27px;text-align:center;color:#d41616;background:#ffffff;">大</div>
<div style="left:85px;top:679px;width:74px;height:25px;line-height:27px;text-align:center;color:#1e1e1e;background:#f0f0f0;">25-09-21</div>
<div style="left:160px;top:679px;width:109px;height:25px;line-height:27px;text-align:center;color:#1e1e1e;background:#f0f0f0;"><span style="color:#27802a">比利亚雷亚尔</span></div>
<div style="left:270px;top:679px;width:88px;height:25px;line-height:27px;text-align:center;color:#1e1e1e;background:#f0f0f0;"><span style="color:#cc2222">2-1</span>(0-1)</div>
<div style="left:359px;top:679px;width:36px;height:25px;line-height:27px;text-align:center;color:#1e1e1e;background:#f0f0f0;">7-0</div>
<div style="left:396px;top:679px;width:122px;height:25px;line-height:27px;text-align:center;color:#1e1e1e;background:#f0f0f0;">奥萨苏纳<span class="rc">1</span></div>
<div style="left:519px;top:679px;width:38px;height:25px;line-height:27px;text-align:center;color:#1e1e1e;background:#fdf9f6;">0.92</div>
<div style="left:558px;top:679px;width:102px;height:25px;line-height:27px;text-align:center;color:#1e1e1e;background:#fdf9f6;">半/一</div>
<div style="left:661px;top:679px;width:39px;height:25px;line-height:27px;text-align:center;color:#1e1e1e;background:#fdf9f6;">0.96</div>
<div style="left:701px;top:679px;width:69px;height:25px;line-height:27px;text-align:center;color:#1e1e1e;background:#eff6fb;">1.64</div>
<div style="left:771px;top:679px;width:69px;height:25px;line-height:27px;text-align:center;color:#1e1e1e;background:#eff6fb;">3.87</div>
<div style="left:841px;top:679px;width:56px;height:25px;line-height:27px;text-align:center;color:#1e1e1e;background:#eff6fb;">5.33</div>
<div style="left:898px;top:679px;width:37px;height:25px;line-height:27px;text-align:center;color:#d41616;background:#f0f0f0;">胜</div>
<div style="left:936px;top:679px;width:37px;height:25px;line-height:27px;text-align:center;color:#d41616;background:#f0f0f0;">赢</div>
<div style="left:974px;top:679px;width:56px;height:25px;line-height:27px;text-align:center;color:#d41616;background:#f0f0f0;">大</div>
<div style="left:4px;top:705px;width:1026px;height:25px;background:#fff;line-height:29px;text-align:center;color:#1e1e1e;letter-spacing:0.24px;">近<span style="color:#cc2222">10</span>场,胜6平2负2, 胜率:<span style="color:#cc2222">60%</span> 让胜率:<span style="color:#cc2222">60%</span> 大率:<span style="color:#cc2222">70%</span> 单率:<span style="color:#cc2222">30%</span></div>
<div style="left:3px;top:405px;width:1028px;height:1px;background:#c4c4c4;"></div>
<div style="left:3px;top:444px;width:1028px;height:1px;background:#c4c4c4;"></div>
<div style="left:3px;top:470px;width:1028px;height:1px;background:#c4c4c4;"></div>
<div style="left:3px;top:496px;width:1028px;height:1px;background:#c4c4c4;"></div>
<div style="left:3px;top:522px;width:1028px;height:1px;background:#c4c4c4;"></div>
<div style="left:3px;top:548px;width:1028px;height:1px;background:#c4c4c4;"></div>
<div style="left:3px;top:574px;width:1028px;height:1px;background:#c4c4c4;"></div>
<div style="left:3px;top:600px;width:1028px;height:1px;background:#c4c4c4;"></div>
<div style="left:3px;top:626px;width:1028px;height:1px;background:#c4c4c4;"></div>
<div style="left:3px;top:652px;width:1028px;height:1px;background:#c4c4c4;"></div>
<div style="left:3px;top:678px;width:1028px;height:1px;background:#c4c4c4;"></div>
<div style="left:3px;top:704px;width:1028px;height:1px;background:#c4c4c4;"></div>
<div style="left:3px;top:730px;width:1028px;height:1px;background:#c4c4c4;"></div>
<div style="left:518px;top:425px;width:513px;height:1px;background:#c4c4c4;"></div>
<div style="left:3px;top:405px;width:1px;height:326px;background:#c4c4c4;"></div>
<div style="left:1030px;top:405px;width:1px;height:326px;background:#c4c4c4;"></div>
<div style="left:84px;top:405px;width:1px;height:40px;background:#c4c4c4;"></div>
<div style="left:159px;top:405px;width:1px;height:300px;background:#c4c4c4;"></div>
<div style="left:269px;top:405px;width:1px;height:300px;background:#c4c4c4;"></div>
<div style="left:358px;top:405px;width:1px;height:300px;background:#c4c4c4;"></div>
<div style="left:395px;top:405px;width:1px;height:300px;background:#c4c4c4;"></div>
<div style="left:518px;top:405px;width:1px;height:300px;background:#c4c4c4;"></div>
<div style="left:557px;top:425px;width:1px;height:280px;background:#c4c4c4;"></div>
<div style="left:660px;top:425px;width:1px;height:280px;background:#c4c4c4;"></div>
<div style="left:700px;top:405px;width:1px;height:300px;background:#c4c4c4;"></div>
<div style="left:770px;top:425px;width:1px;height:280px;background:#c4c4c4;"></div>
<div style="left:840px;top:425px;width:1px;height:280px;background:#c4c4c4;"></div>
<div style="left:897px;top:405px;width:1px;height:300px;background:#c4c4c4;"></div>
<div style="left:935px;top:425px;width:1px;height:280px;background:#c4c4c4;"></div>
<div style="left:973px;top:425px;width:1px;height:280px;background:#c4c4c4;"></div>
<div style="left:4px;top:445px;width:80px;height:25px;background:#006633;"></div>
<div style="left:84px;top:445px;width:1px;height:25px;background:#8cbaa3;"></div>
<div class="lg" style="left:4px;top:445px;width:80px;height:25px;line-height:27px;">西甲</div>
<div style="left:4px;top:470px;width:80px;height:1px;background:#80b2a6;"></div>
<div style="left:4px;top:471px;width:80px;height:25px;background:#006666;"></div>
<div style="left:84px;top:471px;width:1px;height:25px;background:#8cbaba;"></div>
<div class="lg" style="left:4px;top:471px;width:80px;height:25px;line-height:27px;">西杯</div>
<div style="left:4px;top:496px;width:80px;height:1px;background:#80b2a6;"></div>
<div style="left:4px;top:497px;width:80px;height:25px;background:#006633;"></div>
<div style="left:84px;top:497px;width:1px;height:25px;background:#8cbaa3;"></div>
<div class="lg" style="left:4px;top:497px;width:80px;height:25px;line-height:27px;">西甲</div>
<div style="left:4px;top:522px;width:80px;height:1px;background:#c0ae8c;"></div>
<div style="left:4px;top:523px;width:80px;height:25px;background:#ff5500;"></div>
<div style="left:84px;top:523px;width:1px;height:25px;background:#ffb28c;"></div>
<div class="lg" style="left:4px;top:523px;width:80px;height:25px;line-height:27px;">欧冠杯</div>
<div style="left:4px;top:548px;width:80px;height:1px;background:#c0ae8c;"></div>
<div style="left:4px;top:549px;width:80px;height:25px;background:#006633;"></div>
<div style="left:84px;top:549px;width:1px;height:25px;background:#8cbaa3;"></div>
<div class="lg" style="left:4px;top:549px;width:80px;height:25px;line-height:27px;">西甲</div>
<div style="left:4px;top:574px;width:80px;height:1px;background:#80b299;"></div>
<div style="left:4px;top:575px;width:80px;height:25px;background:#006633;"></div>
<div style="left:84px;top:575px;width:1px;height:25px;background:#8cbaa3;"></div>
<div class="lg" style="left:4px;top:575px;width:80px;height:25px;line-height:27px;">西甲</div>
<div style="left:4px;top:600px;width:80px;height:1px;background:#c0ae8c;"></div>
<div style="left:4px;top:601px;width:80px;height:25px;background:#ff5500;"></div>
<div style="left:84px;top:601px;width:1px;height:25px;background:#ffb28c;"></div>
<div class="lg" style="left:4px;top:601px;width:80px;height:25px;line-height:27px;">欧冠杯</div>
<div style="left:4px;top:626px;width:80px;height:1px;background:#c0ae8c;"></div>
<div style="left:4px;top:627px;width:80px;height:25px;background:#006633;"></div>
<div style="left:84px;top:627px;width:1px;height:25px;background:#8cbaa3;"></div>
<div class="lg" style="left:4px;top:627px;width:80px;height:25px;line-height:27px;">西甲</div>
<div style="left:4px;top:652px;width:80px;height:1px;background:#80b299;"></div>
<div style="left:4px;top:653px;width:80px;height:25px;background:#006633;"></div>
<div style="left:84px;top:653px;width:1px;height:25px;background:#8cbaa3;"></div>
<div class="lg" style="left:4px;top:653px;width:80px;height:25px;line-height:27px;">西甲</div>
<div style="left:4px;top:678px;width:80px;height:1px;background:#80b299;"></div>
<div style="left:4px;top:679px;width:80px;height:25px;background:#006633;"></div>
<div style="left:84px;top:679px;width:1px;height:25px;background:#8cbaa3;"></div>
<div class="lg" style="left:4px;top:679px;width:80px;height:25px;line-height:27px;">西甲</div>
<div class="fs" style="left:549px;top:406px;width:61px;height:19px">Crow*<svg class="chev" width="10" height="7" viewBox="0 0 10 7"><path d="M0.8 1.2 L5 5.3 L9.2 1.2" fill="none" stroke="#111" stroke-width="2"/></svg></div>
<div class="fs" style="left:618px;top:406px;width:50px;height:19px">终指<svg class="chev" width="10" height="7" viewBox="0 0 10 7"><path d="M0.8 1.2 L5 5.3 L9.2 1.2" fill="none" stroke="#111" stroke-width="2"/></svg></div>
<div class="fs" style="left:735px;top:406px;width:68px;height:19px">平均值<svg class="chev" width="10" height="7" viewBox="0 0 10 7"><path d="M0.8 1.2 L5 5.3 L9.2 1.2" fill="none" stroke="#111" stroke-width="2"/></svg></div>
<div class="fs" style="left:812px;top:406px;width:50px;height:19px">终指<svg class="chev" width="10" height="7" viewBox="0 0 10 7"><path d="M0.8 1.2 L5 5.3 L9.2 1.2" fill="none" stroke="#111" stroke-width="2"/></svg></div>
<div class="fs" style="left:938px;top:406px;width:51px;height:19px">全场<svg class="chev" width="10" height="7" viewBox="0 0 10 7"><path d="M0.8 1.2 L5 5.3 L9.2 1.2" fill="none" stroke="#111" stroke-width="2"/></svg></div>
<div style="left:3px;top:29px;width:1028px;height:1px;background:#e6e3f6;"></div>
</body></html>
